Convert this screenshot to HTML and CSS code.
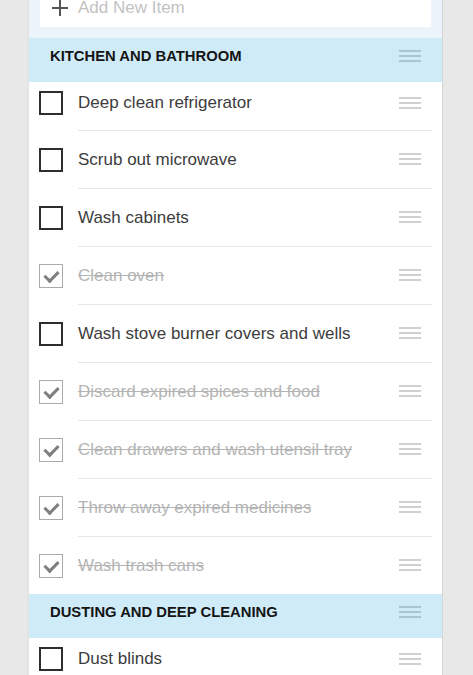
FILE: index.html
```html
<!DOCTYPE html>
<html lang="en">
<head>
  <meta charset="UTF-8" />
  <title>Cleaning Checklist</title>
  <meta name="viewport" content="width=device-width, initial-scale=1" />
  <link rel="stylesheet" href="styles.css">
</head>
<body>
  <div class="sheet">
    <div class="add-bar">
      <div class="add-item">
        <span class="plus"></span>
        <span class="add-text">Add New Item</span>
      </div>
    </div>

    <div class="section">KITCHEN AND BATHROOM<span class="handle"></span></div>
    <ul class="items">
      <li class="item"><span class="box"></span><span class="label">Deep clean refrigerator</span><span class="handle"></span></li>
      <li class="item"><span class="box"></span><span class="label">Scrub out microwave</span><span class="handle"></span></li>
      <li class="item"><span class="box"></span><span class="label">Wash cabinets</span><span class="handle"></span></li>
      <li class="item done"><span class="box"></span><span class="label">Clean oven</span><span class="handle"></span></li>
      <li class="item"><span class="box"></span><span class="label">Wash stove burner covers and wells</span><span class="handle"></span></li>
      <li class="item done"><span class="box"></span><span class="label">Discard expired spices and food</span><span class="handle"></span></li>
      <li class="item done"><span class="box"></span><span class="label">Clean drawers and wash utensil tray</span><span class="handle"></span></li>
      <li class="item done"><span class="box"></span><span class="label">Throw away expired medicines</span><span class="handle"></span></li>
      <li class="item done"><span class="box"></span><span class="label">Wash trash cans</span><span class="handle"></span></li>
    </ul>

    <div class="section">DUSTING AND DEEP CLEANING<span class="handle"></span></div>
    <ul class="items">
      <li class="item"><span class="box"></span><span class="label">Dust blinds</span><span class="handle"></span></li>
    </ul>
  </div>
</body>
</html>
```

FILE: styles.css
```css
:root {
  --page-bg: #e8e8e8;
  --top-bg: #edf3fa;
  --section-bg: #d0ebf8;
  --line: #e6e6e6;
  --text: #3c3c3c;
  --muted: #b4b4b4;
}
* { box-sizing: border-box; }
html, body { height: 100%; }
body {
  margin: 0;
  font-family: 'Liberation Sans', Arial, sans-serif;
  background: var(--page-bg);
  overflow: hidden;
}
.sheet {
  width: 414px;
  min-height: 100%;
  margin-left: 29px;
  background: #fff;
  border-right: 1px solid #d6d6d6;
  box-shadow: -1px 0 2px rgba(0, 0, 0, 0.04);
}
.add-bar {
  background: var(--top-bg);
  padding: 0 11px 11px 11px;
}
.add-item {
  display: flex;
  align-items: center;
  height: 38px;
  margin-top: -11px;
  background: #fff;
  padding-left: 12px;
}
.plus {
  flex: none;
  position: relative;
  width: 16px;
  height: 16px;
}
.plus::before,
.plus::after {
  content: '';
  position: absolute;
  background: #555;
}
.plus::before { left: 0; right: 0; top: 7px; height: 1.5px; }
.plus::after { top: 0; bottom: 0; left: 7px; width: 1.5px; }
.add-text {
  margin-left: 10px;
  font-size: 17px;
  color: #c2c2c2;
}
.section {
  display: flex;
  align-items: center;
  justify-content: space-between;
  height: 44px;
  padding: 0 21px 8px 21px;
  background: var(--section-bg);
  font-size: 14.8px;
  font-weight: bold;
  color: #141414;
}
.section .handle { border-color: #a8c5d2; }
.section .handle::before { background: #a8c5d2; }
.items {
  list-style: none;
  margin: 0;
  padding: 0;
}
.item {
  display: flex;
  align-items: center;
  height: 58px;
  padding-left: 10px;
  padding-top: 2px;
  position: relative;
}
.item:first-child {
  height: 48px;
  align-items: flex-start;
  padding-top: 9px;
}
.item + .item::before {
  content: '';
  position: absolute;
  top: 0;
  left: 49px;
  right: 10px;
  height: 1px;
  background: var(--line);
}
.box {
  flex: none;
  width: 24px;
  height: 24px;
  border: 2px solid #2e2e2e;
  position: relative;
}
.label {
  flex: 1;
  margin-left: 15px;
  font-size: 17px;
  color: var(--text);
  white-space: nowrap;
}
.item:first-child .label { line-height: 24px; }
.done .box { border: 1.5px solid #ababab; }
.done .box::after {
  content: '';
  position: absolute;
  left: 6.5px;
  top: 3px;
  width: 6px;
  height: 11px;
  border: solid #7f7f7f;
  border-width: 0 3px 3px 0;
  transform: rotate(45deg);
}
.done .label {
  color: var(--muted);
  text-decoration: line-through;
}
.handle {
  flex: none;
  position: relative;
  width: 22px;
  height: 12px;
  margin-right: 21px;
  border-top: 2px solid #d0d0d0;
  border-bottom: 2px solid #d0d0d0;
  margin-top: -2px;
}
.handle::before {
  content: '';
  position: absolute;
  left: 0;
  right: 0;
  top: 3px;
  height: 2px;
  background: #d0d0d0;
}
.item:first-child .handle { margin-top: 6px; }
.section .handle { margin-right: 0; margin-top: 0; }
```
